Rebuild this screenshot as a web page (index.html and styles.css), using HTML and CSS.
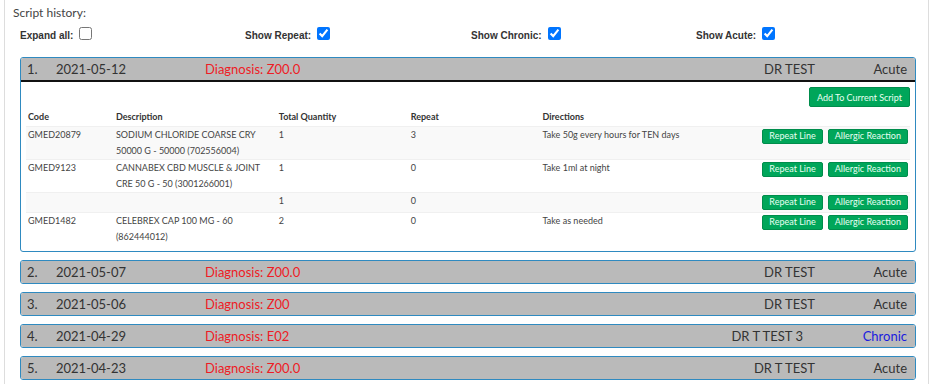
FILE: index.html
```html
<!DOCTYPE html>
<html>
<head>
<meta charset="utf-8">
<link rel="stylesheet" href="styles.css">
</head>
<body>
<div class="page">
  <div class="title">Script history:</div>
  <div class="filters">
    <label class="filter">Expand all:<input type="checkbox"></label>
    <label class="filter">Show Repeat:<input type="checkbox" checked></label>
    <label class="filter">Show Chronic:<input type="checkbox" checked></label>
    <label class="filter">Show Acute:<input type="checkbox" checked></label>
  </div>

  <div class="panel open">
    <div class="ph">
      <span class="num">1.</span><span class="date">2021-05-12</span><span class="diag">Diagnosis: Z00.0</span>
      <span class="doc">DR TEST</span><span class="type">Acute</span>
    </div>
    <div class="pb">
      <div class="actions"><button class="btn">Add To Current Script</button></div>
      <table class="tbl">
        <thead>
          <tr><th class="c1">Code</th><th class="c2">Description</th><th class="c3">Total Quantity</th><th class="c4">Repeat</th><th class="c5">Directions</th><th class="c6"></th></tr>
        </thead>
        <tbody>
          <tr class="odd"><td>GMED20879</td><td>SODIUM CHLORIDE COARSE CRY 50000 G - 50000 (702556004)</td><td>1</td><td>3</td><td>Take 50g every hours for TEN days</td><td class="btns"><div class="bwrap"><button class="btn sm">Repeat Line</button><button class="btn sm">Allergic Reaction</button></div></td></tr>
          <tr><td>GMED9123</td><td>CANNABEX CBD MUSCLE &amp; JOINT CRE 50 G - 50 (3001266001)</td><td>1</td><td>0</td><td>Take 1ml at night</td><td class="btns"><div class="bwrap"><button class="btn sm">Repeat Line</button><button class="btn sm">Allergic Reaction</button></div></td></tr>
          <tr class="odd"><td></td><td></td><td>1</td><td>0</td><td></td><td class="btns"><div class="bwrap"><button class="btn sm">Repeat Line</button><button class="btn sm">Allergic Reaction</button></div></td></tr>
          <tr><td>GMED1482</td><td>CELEBREX CAP 100 MG - 60 (862444012)</td><td>2</td><td>0</td><td>Take as needed</td><td class="btns"><div class="bwrap"><button class="btn sm">Repeat Line</button><button class="btn sm">Allergic Reaction</button></div></td></tr>
        </tbody>
      </table>
    </div>
  </div>

  <div class="panel">
    <div class="ph">
      <span class="num">2.</span><span class="date">2021-05-07</span><span class="diag">Diagnosis: Z00.0</span>
      <span class="doc">DR TEST</span><span class="type">Acute</span>
    </div>
  </div>
  <div class="panel">
    <div class="ph">
      <span class="num">3.</span><span class="date">2021-05-06</span><span class="diag">Diagnosis: Z00</span>
      <span class="doc">DR TEST</span><span class="type">Acute</span>
    </div>
  </div>
  <div class="panel">
    <div class="ph">
      <span class="num">4.</span><span class="date">2021-04-29</span><span class="diag">Diagnosis: E02</span>
      <span class="doc doc-shift">DR T TEST 3</span><span class="type chronic">Chronic</span>
    </div>
  </div>
  <div class="panel">
    <div class="ph">
      <span class="num">5.</span><span class="date">2021-04-23</span><span class="diag">Diagnosis: Z00.0</span>
      <span class="doc">DR T TEST</span><span class="type">Acute</span>
    </div>
  </div>
</div>
</body>
</html>
```

FILE: styles.css
```css
* { box-sizing: border-box; }
html, body { margin: 0; padding: 0; background: #fff; }
body { font-family: "Source Sans Pro", Lato, "Noto Sans", sans-serif; color: #333; }

.page {
  margin: 0 4px;
  width: 925px;
  height: 384px;
  border-left: 1px solid #ddd;
  border-right: 1px solid #ddd;
  padding: 6px 13px 0 15px;
  overflow: hidden;
}

.title {
  font-size: 12px;
  line-height: 14px;
  color: #444;
  margin-left: -7px;
}

.filters {
  display: grid;
  grid-template-columns: 225px 226px 225px 225px;
  margin-top: 5px;
  height: 20px;
  align-items: center;
}
.filter {
  font-family: "Liberation Sans", Arial, sans-serif;
  font-weight: bold;
  font-size: 10px;
  color: #333;
  display: flex;
  align-items: center;
  white-space: pre;
}
.filter input {
  margin: 0 0 0 6px;
  width: 13px;
  height: 13px;
  position: relative;
  top: -2px;
}

.panel {
  border: 1px solid #2f8ac0;
  border-radius: 3px;
  margin-top: 8px;
  width: 896px;
  overflow: hidden;
}
.panel.open { margin-top: 12px; }

.ph {
  background: #bababa;
  height: 22px;
  display: flex;
  align-items: center;
  font-size: 13px;
  color: #333;
  padding: 0 8px 0 6px;
}
.open .ph { border-bottom: 2px solid #111; height: 24px; padding-bottom: 1px; }
.num { width: 29px; }
.date { width: 149px; }
.diag { color: #ee1c25; flex: 1; }
.doc { width: 120px; text-align: right; }
.doc-shift { padding-right: 12px; }
.type { width: 92px; text-align: right; }
.chronic { color: #1a1adf; }

.pb { padding: 5px 5px 6px 5px; }
.actions { display: flex; justify-content: flex-end; padding-right: 0; }

.btn {
  font-family: inherit;
  background: #00a65a;
  border: 1px solid #008d4c;
  border-radius: 2px;
  color: #e8fff2;
  font-size: 9px;
  height: 20px;
  padding: 0 7px;
  cursor: pointer;
}
.btn.sm { height: 15px; padding: 0 6px; font-size: 9px; line-height: 12px; }
.bwrap { display: flex; justify-content: flex-end; gap: 5px; }

.tbl {
  width: 100%;
  border-collapse: collapse;
  margin-top: 2px;
  font-size: 9px;
  color: #444;
}
.tbl th {
  text-align: left;
  font-weight: bold;
  color: #333;
  padding: 0 2px;
  height: 17px;
  line-height: 14px;
  vertical-align: middle;
}
.tbl td {
  padding: 0 2px;
  line-height: 16px;
  vertical-align: top;
}
.tbl tr.odd td { background: #f9f9f9; }
.tbl tbody tr td { border-top: 1px solid #f0f0f0; }
.c1 { width: 88px; }
.c2 { width: 163px; }
.c3 { width: 132px; }
.c4 { width: 132px; }
.c5 { width: 220px; }
.tbl td.btns { padding: 2px 2px 2px; white-space: nowrap; }
```
